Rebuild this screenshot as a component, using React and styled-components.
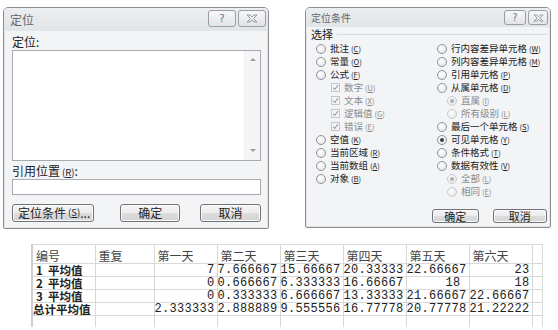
import React from "react";
import styled, { createGlobalStyle, css } from "styled-components";

const Global = createGlobalStyle`
  html, body { margin: 0; padding: 0; background: #ffffff; }
  body { font-family: "Noto Sans CJK SC", "Noto Sans", sans-serif; color: #222; }
  * { box-sizing: border-box; }
`;

const Page = styled.div`
  width: 558px;
  height: 330px;
  overflow: hidden;
  background: #fff;
`;

const Dialogs = styled.div`
  display: flex;
  align-items: flex-start;
  gap: 36px;
  padding: 7px 0 0 3px;
`;

const Window = styled.div`
  width: ${(p) => p.$w}px;
  height: ${(p) => p.$h}px;
  border: 1px solid #8c8c8c;
  border-radius: 5px 5px 2px 2px;
  background: #f3f4f6;
  display: flex;
  flex-direction: column;
  overflow: hidden;
  box-shadow: 0 0 0 1px #e4e6ea inset;
`;

const TitleBar = styled.div`
  height: ${(p) => p.$h}px;
  flex: none;
  display: flex;
  align-items: center;
  justify-content: space-between;
  padding: 0 2px 0 ${(p) => p.$pl}px;
  background: linear-gradient(#eceef1, #e1e4e8);
  color: #666;
  font-size: ${(p) => p.$fs}px;
`;

const TitleButtons = styled.div`
  display: flex;
  gap: 2px;
  align-self: flex-start;
  margin-top: 2px;
`;

const TitleBtn = styled.div`
  width: ${(p) => p.$w}px;
  height: ${(p) => p.$h}px;
  border: 1px solid #9a9da2;
  border-radius: 3px;
  background: linear-gradient(#f7f8f9, #e2e4e7);
  display: flex;
  align-items: center;
  justify-content: center;
  color: #777;
  font-family: "DejaVu Sans", sans-serif;
  font-size: ${(p) => p.$fs}px;
  line-height: 1;
`;

const Body = styled.div`
  flex: 1;
  display: flex;
  flex-direction: column;
  padding: ${(p) => p.$pad};
  font-size: ${(p) => p.$fs}px;
`;

const Label = styled.div`
  height: 14px;
  line-height: 14px;
  margin-top: ${(p) => p.$mt || 0}px;
  color: #222;
`;

const Acc = styled.span`
  font-size: 0.8em;
  margin-left: 2px;
  color: inherit;
  u { text-decoration: underline; }
`;

const ListBox = styled.div`
  margin-top: 1px;
  height: 111px;
  border: 1px solid #a8abb0;
  background: #fff;
  display: flex;
  justify-content: flex-end;
`;

const ScrollTrack = styled.div`
  width: 16px;
  background: #f4f5f6;
  border-left: 1px solid #eceef0;
  display: flex;
  flex-direction: column;
  justify-content: space-between;
  align-items: center;
  padding: 7px 0 8px;
`;

const Arrow = styled.div`
  width: 0;
  height: 0;
  border-left: 3px solid transparent;
  border-right: 3px solid transparent;
  ${(p) =>
    p.$down
      ? css`border-top: 3px solid #9a9da2;`
      : css`border-bottom: 3px solid #9a9da2;`}
`;

const TextInput = styled.div`
  height: 16px;
  margin-top: 1px;
  border: 1px solid #a8abb0;
  background: #fff;
`;

const ButtonRow = styled.div`
  display: flex;
  gap: ${(p) => p.$gap || 10}px;
  margin-top: ${(p) => p.$mt}px;
  margin-left: ${(p) => p.$ml || 0}px;
`;

const Button = styled.div`
  width: ${(p) => p.$w}px;
  margin-left: ${(p) => p.$ml || 0}px;
  height: ${(p) => p.$h}px;
  border: 1px solid #707378;
  border-radius: 3px;
  background: linear-gradient(#f5f5f5 0%, #ececec 48%, #dcdcdc 52%, #d4d4d4 100%);
  box-shadow: inset 0 0 0 1px #fbfbfb;
  display: flex;
  align-items: center;
  justify-content: ${(p) => (p.$left ? "flex-start" : "center")};
  padding-left: ${(p) => (p.$left ? 5 : 0)}px;
  color: #222;
  font-size: inherit;
  line-height: 1;
`;

const GroupHead = styled.div`
  display: flex;
  align-items: center;
  gap: 4px;
  height: 14px;
  color: #222;
  font-size: 11px;
  &::after {
    content: "";
    flex: 1;
    height: 1px;
    background: #d8dade;
  }
`;

const OptionGrid = styled.div`
  display: grid;
  grid-template-columns: 121px 1fr;
  padding-left: 5px;
  margin-top: 1px;
`;

const Column = styled.div`
  display: flex;
  flex-direction: column;
`;

const Option = styled.div`
  height: 13px;
  display: flex;
  align-items: center;
  gap: 4px;
  padding-left: ${(p) => p.$indent || 0}px;
  color: ${(p) => (p.$disabled ? "#8c8c8c" : "#222")};
  font-size: 9.5px;
  line-height: 13px;
  white-space: nowrap;
`;

const Radio = styled.span`
  width: 10px;
  height: 10px;
  flex: none;
  border-radius: 50%;
  border: 1px solid ${(p) => (p.$disabled ? "#c8cacd" : "#8f949a")};
  background: radial-gradient(circle at 40% 35%, #ffffff, #dfe1e4);
  display: flex;
  align-items: center;
  justify-content: center;
  &::after {
    content: "";
    width: 4px;
    height: 4px;
    border-radius: 50%;
    background: ${(p) => (p.$disabled ? "#a9acb0" : "#3b4048")};
    display: ${(p) => (p.$on ? "block" : "none")};
  }
`;

const Check = styled.span`
  width: 9px;
  height: 9px;
  flex: none;
  border: 1px solid #c2c5c9;
  background: #f4f5f6;
  display: flex;
  align-items: center;
  justify-content: center;
`;

const Table = styled.table`
  border-collapse: collapse;
  margin: 15px 0 0 31px;
  table-layout: fixed;
  font-size: 12px;
`;

const Cell = styled.td`
  width: ${(p) => p.$w}px;
  height: ${(p) => p.$h || 13}px;
  padding: 0 ${(p) => p.$pr ?? 2}px 0 ${(p) => p.$pl ?? 3}px;
  border: 1px solid #d9d9d9;
  ${(p) => p.$first && css`border-left: 2px solid #cfcfcf;`}
  ${(p) => p.$noBottom && css`border-bottom: none;`}
  text-align: ${(p) => (p.$num ? "right" : "left")};
  vertical-align: bottom;
  white-space: pre;
  overflow: visible;
  line-height: 12px;
  color: #222;
  font-family: ${(p) =>
    p.$num ? `"Liberation Mono", "DejaVu Sans Mono", monospace` : `"Noto Sans CJK SC", sans-serif`};
  font-size: ${(p) => (p.$bold ? "11.5px" : "12px")};
  font-weight: ${(p) => (p.$bold ? 700 : 400)};
  letter-spacing: ${(p) => (p.$num ? "0.3px" : "0")};
`;

const HeadCell = styled(Cell).attrs({ as: "td" })`
  color: #444;
  vertical-align: middle;
  padding-top: 4px;
`;

function AccKey({ k }) {
  return (
    <Acc>
      (<u>{k}</u>)
    </Acc>
  );
}

function CloseGlyph({ s = 9 }) {
  return (
    <svg width={s + 3} height={s} viewBox="0 0 12 9">
      <path
        d="M1 1 L4 1 L6 3 L8 1 L11 1 L7.5 4.5 L11 8 L8 8 L6 6 L4 8 L1 8 L4.5 4.5 Z"
        fill="none"
        stroke="#8a8d92"
        strokeWidth="0.9"
        strokeLinejoin="round"
      />
    </svg>
  );
}

function CheckMark() {
  return (
    <svg width="7" height="7" viewBox="0 0 7 7">
      <path d="M1 3.6 L2.8 5.4 L6 1.2" fill="none" stroke="#9ea2a7" strokeWidth="1.1" />
    </svg>
  );
}

function GotoDialog() {
  return (
    <Window $w={266} $h={222}>
      <TitleBar $h={23} $pl={6} $fs={12}>
        <span>定位</span>
        <TitleButtons>
          <TitleBtn $w={28} $h={17} $fs={11}>?</TitleBtn>
          <TitleBtn $w={28} $h={17} $fs={10}>
            <CloseGlyph />
          </TitleBtn>
        </TitleButtons>
      </TitleBar>
      <Body $pad="4px 7px 0 8px" $fs={12}>
        <Label>定位:</Label>
        <ListBox>
          <ScrollTrack>
            <Arrow />
            <Arrow $down />
          </ScrollTrack>
        </ListBox>
        <Label $mt={3}>
          引用位置<AccKey k="R" />:
        </Label>
        <TextInput />
        <ButtonRow $mt={9} $gap={0}>
          <Button $w={90} $h={18} $left>
            定位条件<AccKey k="S" />...
          </Button>
          <Button $w={66} $h={18} $ml={16}>确定</Button>
          <Button $w={67} $h={18} $ml={10}>取消</Button>
        </ButtonRow>
      </Body>
    </Window>
  );
}

const leftOpts = [
  { t: "批注", k: "C", type: "r" },
  { t: "常量", k: "O", type: "r" },
  { t: "公式", k: "F", type: "r" },
  { t: "数字", k: "U", type: "c", ind: 15, dis: true },
  { t: "文本", k: "X", type: "c", ind: 15, dis: true },
  { t: "逻辑值", k: "G", type: "c", ind: 15, dis: true },
  { t: "错误", k: "E", type: "c", ind: 15, dis: true },
  { t: "空值", k: "K", type: "r" },
  { t: "当前区域", k: "R", type: "r" },
  { t: "当前数组", k: "A", type: "r" },
  { t: "对象", k: "B", type: "r" },
];

const rightOpts = [
  { t: "行内容差异单元格", k: "W", type: "r" },
  { t: "列内容差异单元格", k: "M", type: "r" },
  { t: "引用单元格", k: "P", type: "r" },
  { t: "从属单元格", k: "D", type: "r" },
  { t: "直属", k: "I", type: "r", ind: 10, dis: true, on: true },
  { t: "所有级别", k: "L", type: "r", ind: 10, dis: true },
  { t: "最后一个单元格", k: "S", type: "r" },
  { t: "可见单元格", k: "Y", type: "r", on: true },
  { t: "条件格式", k: "T", type: "r" },
  { t: "数据有效性", k: "V", type: "r" },
  { t: "全部", k: "L", type: "r", ind: 10, dis: true, on: true },
  { t: "相同", k: "E", type: "r", ind: 10, dis: true },
];

function OptionItem({ o }) {
  return (
    <Option $indent={o.ind} $disabled={o.dis}>
      {o.type === "r" ? (
        <Radio $on={o.on} $disabled={o.dis} />
      ) : (
        <Check>
          <CheckMark />
        </Check>
      )}
      <span>
        {o.t}
        <AccKey k={o.k} />
      </span>
    </Option>
  );
}

function SpecialDialog() {
  return (
    <Window $w={246} $h={221}>
      <TitleBar $h={19} $pl={5} $fs={10}>
        <span>定位条件</span>
        <TitleButtons>
          <TitleBtn $w={22} $h={15} $fs={10}>?</TitleBtn>
          <TitleBtn $w={20} $h={15} $fs={9}>
            <CloseGlyph s={8} />
          </TitleBtn>
        </TitleButtons>
      </TitleBar>
      <Body $pad="0 3px 0 5px" $fs={11}>
        <GroupHead>选择</GroupHead>
        <OptionGrid>
          <Column>
            {leftOpts.map((o) => (
              <OptionItem key={o.t} o={o} />
            ))}
          </Column>
          <Column>
            {rightOpts.map((o) => (
              <OptionItem key={o.t} o={o} />
            ))}
          </Column>
        </OptionGrid>
        <ButtonRow $mt={11} $ml={121} $gap={14}>
          <Button $w={47} $h={14}>确定</Button>
          <Button $w={55} $h={14}>取消</Button>
        </ButtonRow>
      </Body>
    </Window>
  );
}

const widths = [63, 59, 62, 61, 59, 60, 60, 61, 10];
const headers = ["编号", "重复", "第一天", "第二天", "第三天", "第四天", "第五天", "第六天", ""];
const rows = [
  { label: "1  平均值", vals: ["7", "7.666667", "15.66667", "20.33333", "22.66667", "23"] },
  { label: "2  平均值", vals: ["0", "0.666667", "6.333333", "16.66667", "18", "18"] },
  { label: "3  平均值", vals: ["0", "0.333333", "6.666667", "13.33333", "21.66667", "22.66667"] },
  { label: "总计平均值", total: true, vals: ["2.333333", "2.888889", "9.555556", "16.77778", "20.77778", "21.22222"] },
];

function DataTable() {
  return (
    <Table>
      <tbody>
        <tr>
          {headers.map((h, i) => (
            <HeadCell key={i} $w={widths[i]} $h={19} $first={i === 0}>
              {h}
            </HeadCell>
          ))}
        </tr>
        {rows.map((r, ri) => (
          <tr key={ri}>
            <Cell $w={widths[0]} $first $bold $pl={r.total ? 0 : 3}>
              {r.label}
            </Cell>
            <Cell $w={widths[1]} />
            {r.vals.map((v, i) => (
              <Cell key={i} $w={widths[i + 2]} $num $pr={v === "18" && i === 4 ? 8 : 2} $pl={0}>
                {v}
              </Cell>
            ))}
            <Cell $w={widths[8]} />
          </tr>
        ))}
        <tr>
          {widths.map((w, i) => (
            <Cell key={i} $w={w} $h={11} $first={i === 0} $noBottom />
          ))}
        </tr>
      </tbody>
    </Table>
  );
}

export default function App() {
  return (
    <Page>
      <Global />
      <Dialogs>
        <GotoDialog />
        <SpecialDialog />
      </Dialogs>
      <DataTable />
    </Page>
  );
}
